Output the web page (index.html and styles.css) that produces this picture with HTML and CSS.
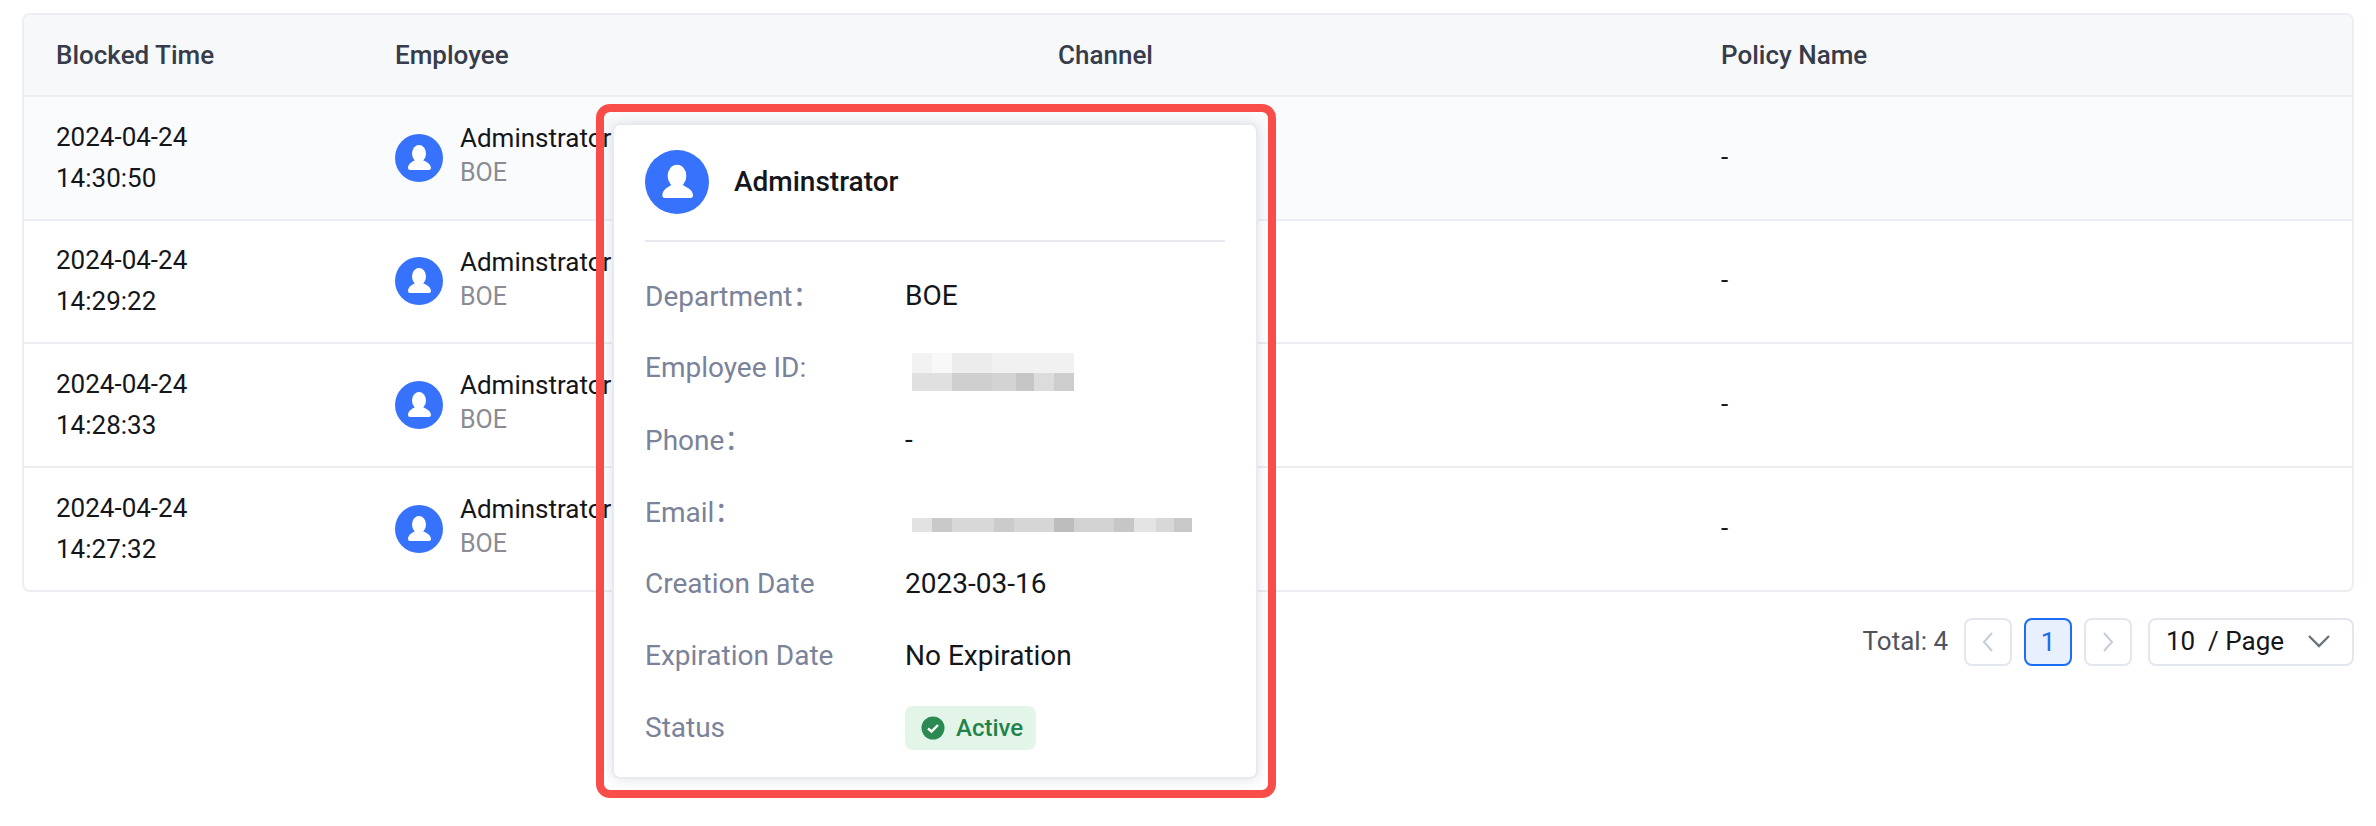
FILE: index.html
```html
<!DOCTYPE html>
<html lang="en">
<head>
<meta charset="UTF-8">
<title>Blocked Records</title>
<link rel="stylesheet" href="styles.css">
</head>
<body>
<svg class="defs" width="0" height="0">
  <symbol id="user" viewBox="0 0 48 48">
    <circle cx="24" cy="24" r="24" fill="#3672fb"/>
    <ellipse cx="24" cy="19.5" rx="7" ry="8.4" fill="#fff"/>
    <path d="M13 34c0-4.600 5-6.500 8-8.500h6c3 2 9 3.900 9 8.500q0 2-2 2H15q-2 0-2-2z" fill="#fff"/>
  </symbol>
</svg>

<div class="page">
  <div class="table-box">
    <table class="list">
      <thead>
        <tr><th>Blocked Time</th><th>Employee</th><th>Channel</th><th>Policy Name</th></tr>
      </thead>
      <tbody>
        <tr class="hover">
          <td class="time">2024-04-24<br>14:30:50</td>
          <td><div class="emp"><svg class="ava"><use href="#user"/></svg><div><div class="emp-name">Adminstrator</div><div class="emp-dept">BOE</div></div></div></td>
          <td></td>
          <td class="dash">-</td>
        </tr>
        <tr>
          <td class="time">2024-04-24<br>14:29:22</td>
          <td><div class="emp"><svg class="ava"><use href="#user"/></svg><div><div class="emp-name">Adminstrator</div><div class="emp-dept">BOE</div></div></div></td>
          <td></td>
          <td class="dash">-</td>
        </tr>
        <tr>
          <td class="time">2024-04-24<br>14:28:33</td>
          <td><div class="emp"><svg class="ava"><use href="#user"/></svg><div><div class="emp-name">Adminstrator</div><div class="emp-dept">BOE</div></div></div></td>
          <td></td>
          <td class="dash">-</td>
        </tr>
        <tr>
          <td class="time">2024-04-24<br>14:27:32</td>
          <td><div class="emp"><svg class="ava"><use href="#user"/></svg><div><div class="emp-name">Adminstrator</div><div class="emp-dept">BOE</div></div></div></td>
          <td></td>
          <td class="dash">-</td>
        </tr>
      </tbody>
    </table>
  </div>

  <div class="pager">
    <span class="total">Total: 4</span>
    <span class="pg-btn off"><svg width="16" height="24" viewBox="0 0 16 24"><path d="M12 3L4 12l8 9" fill="none" stroke="#c6ccd9" stroke-width="2"/></svg></span>
    <span class="pg-btn cur">1</span>
    <span class="pg-btn off"><svg width="16" height="24" viewBox="0 0 16 24"><path d="M4 3l8 9-8 9" fill="none" stroke="#c6ccd9" stroke-width="2"/></svg></span>
    <span class="pg-size">
      <span>10&nbsp; / Page</span>
      <svg width="24" height="14" viewBox="0 0 24 14"><path d="M2 2l10 10L22 2" fill="none" stroke="#6b7280" stroke-width="2.400"/></svg>
    </span>
  </div>
</div>

<div class="mark">
  <div class="card">
    <div class="card-head">
      <svg class="ava-big"><use href="#user"/></svg>
      <span class="card-name">Adminstrator</span>
    </div>
    <div class="info">
      <div class="info-row"><span class="lbl cn">Department：</span><span class="val">BOE</span></div>
      <div class="info-row"><span class="lbl">Employee ID:</span><span class="smear smear-id"></span></div>
      <div class="info-row"><span class="lbl cn">Phone：</span><span class="val">-</span></div>
      <div class="info-row"><span class="lbl cn">Email：</span><span class="smear smear-mail"></span></div>
      <div class="info-row"><span class="lbl">Creation Date</span><span class="val">2023-03-16</span></div>
      <div class="info-row"><span class="lbl">Expiration Date</span><span class="val">No Expiration</span></div>
      <div class="info-row"><span class="lbl">Status</span>
        <span class="tag">
          <svg width="24" height="24" viewBox="0 0 24 24"><circle cx="12" cy="12" r="11.500" fill="#2a8a52"/><path d="M7 12.500l3.500 3L17 9" fill="none" stroke="#fff" stroke-width="2.400"/></svg>
          Active
        </span>
      </div>
    </div>
  </div>
</div>
</body>
</html>
```

FILE: styles.css
```css
*{margin:0;padding:0;box-sizing:border-box}
html,body{height:100%;background:#fff;overflow:hidden}
body{font-family:"Roboto","Noto Sans CJK SC",sans-serif;font-size:26px;color:#14161a;position:relative}
.defs{position:absolute}

.page{padding:13px 22px 0 22px}
.table-box{border:2px solid #eceef3;border-radius:8px;overflow:hidden}
.list{width:100%;border-collapse:collapse;table-layout:fixed}
.list th:nth-child(1){width:339px}
.list th:nth-child(2){width:663px}
.list th:nth-child(3){width:663px}
.list th{height:81px;padding-left:32px;background:#f7f8fa;border-bottom:2px solid #eceef3;text-align:left;font-weight:500;color:#363c4a}
.list td{height:123.500px;padding-left:32px;border-bottom:2px solid #eceef3;vertical-align:middle}
.list tr:last-child td{border-bottom:0}
.list tr.hover td{background:#fafbfd}
.time{line-height:41px}
.list td.dash{padding-bottom:2px}

.emp{display:flex;align-items:center;gap:17px}
.ava{width:48px;height:48px;flex:none}
.emp-name{line-height:36px;margin-top:-5px}
.emp-dept{line-height:34px;color:#8a8b93;font-size:25px}

.pager{display:flex;justify-content:flex-end;align-items:center;margin-top:26px}
.total{color:#4f5460;margin-right:16px;margin-top:-2px}
.pg-btn{width:48px;height:48px;margin-right:12px;border:2px solid #e3e6ee;border-radius:8px;display:flex;align-items:center;justify-content:center}
.pg-btn.cur{background:#e9f0fd;border-color:#1c6cf5;color:#1c6cf5}
.pg-size{width:206px;height:48px;margin-left:4px;padding:0 21px 2px 16px;border:2px solid #e3e6ee;border-radius:8px;display:flex;align-items:center;justify-content:space-between}

.mark{position:absolute;left:596px;top:104px;width:680px;height:694px;padding:11px 10px 11px 8px;border:8px solid #f94d4a;border-radius:14px}
.card{height:100%;padding:0 31px;background:#fff;border:2px solid #e8eaf1;border-radius:8px;box-shadow:0 0 14px rgba(40,50,80,.14)}
.card-head{display:flex;gap:25px;height:117px;padding-top:25px;border-bottom:2px solid #e7e9ee;align-items:flex-start}
.ava-big{width:64px;height:64px;flex:none}
.card-name{font-size:28px;font-weight:500;line-height:64px}
.info{padding-top:17px}
.info-row{display:grid;grid-template-columns:260px 1fr;align-items:center;height:72px;font-size:28px}
.lbl{color:#7a8399}
.lbl.cn{margin-top:-3px}
.smear{display:block;height:38px;margin-left:7px;position:relative;top:5px;filter:blur(.6px)}
.smear-id{width:162px;background:
  linear-gradient(90deg,#f2f2f2 0 20px,#f8f8f8 20px 40px,#ececec 40px 80px,#f1f1f1 80px 162px) 0 0/100% 20px no-repeat,
  linear-gradient(90deg,#e0e0e0 0 40px,#cfcfcf 40px 80px,#d3d3d3 80px 104px,#c6c6c6 104px 122px,#dcdcdc 122px 142px,#cdcdcd 142px 162px) 0 20px/100% 18px no-repeat}
.smear-mail{width:280px;top:14px;height:14px;background:linear-gradient(90deg,#e2e2e2 0 20px,#c9c9c9 20px 40px,#d8d8d8 40px 82px,#cbcbcb 82px 102px,#d6d6d6 102px 142px,#bdbdbd 142px 162px,#d2d2d2 162px 202px,#c6c6c6 202px 222px,#e4e4e4 222px 244px,#d8d8d8 244px 262px,#c8c8c8 262px 280px)}
.tag{display:inline-flex;align-items:center;gap:11px;width:131px;height:44px;margin:2px 0 0;padding-left:16px;background:#e2f5e8;border-radius:8px;color:#23824c;font-size:24px;font-weight:500}
```
